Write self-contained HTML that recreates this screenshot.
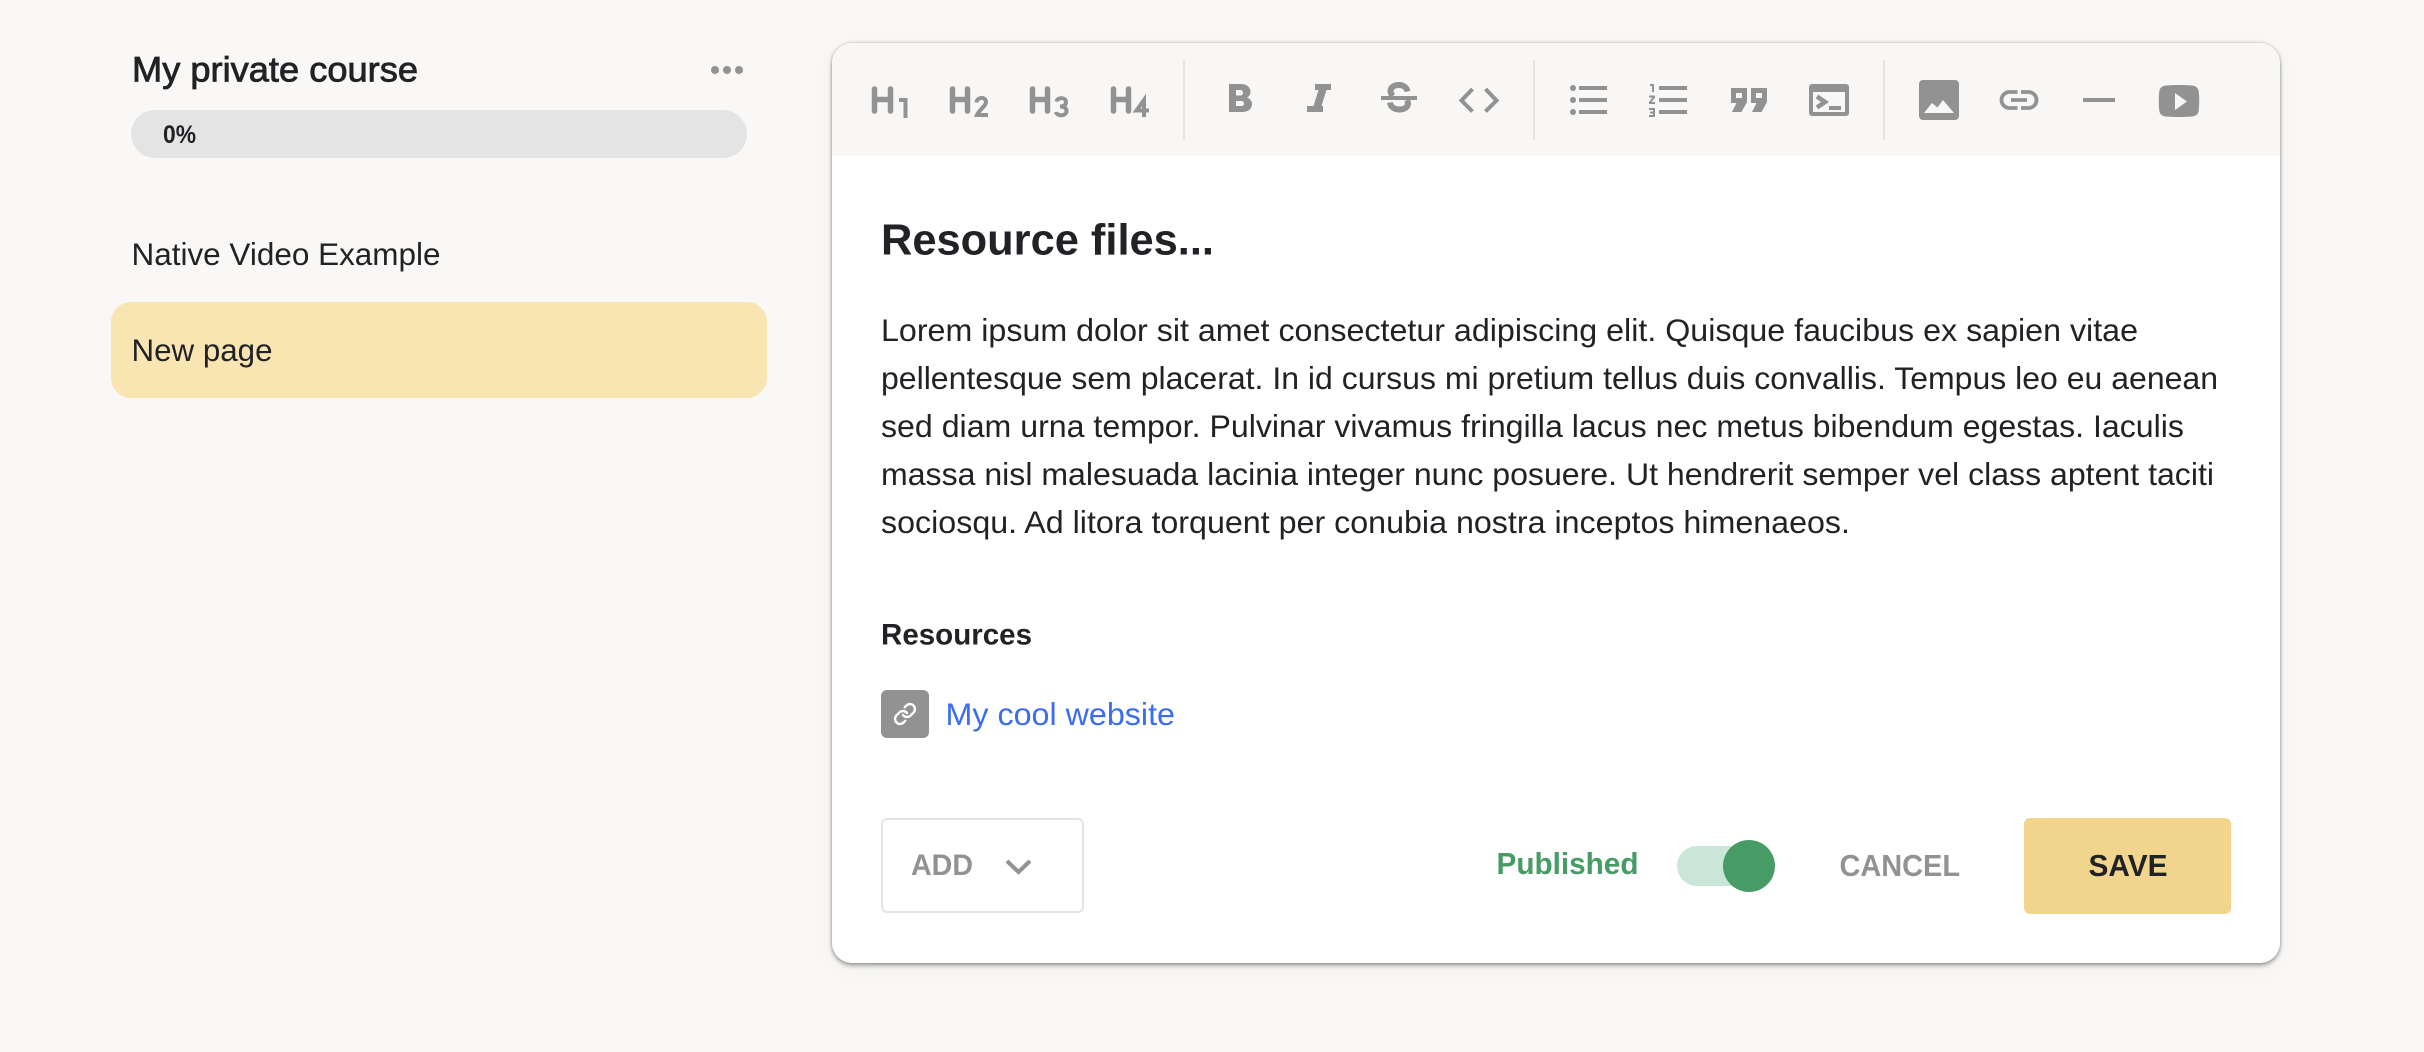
<!DOCTYPE html>
<html lang="en">
<head>
<meta charset="utf-8">
<title>My private course</title>
<style>
html,body{margin:0;padding:0;width:2424px;height:1052px;overflow:hidden;background:#f9f8f6}
body{position:relative;font-family:"Liberation Sans",sans-serif}
.progress{position:absolute;left:131px;top:110px;width:616px;height:48px;border-radius:24px;background:#e4e4e4}
.active{position:absolute;left:111px;top:302px;width:656px;height:96px;border-radius:20px;background:#f8e5b2}
.card{position:absolute;left:832px;top:43px;width:1448px;height:920px;border-radius:20px;background:#fff;box-shadow:0 0 3px rgba(0,0,0,.28),0 3px 4px rgba(0,0,0,.28),0 6px 30px rgba(0,0,0,.03)}
.bar{position:absolute;left:0;top:0;width:100%;height:113px;background:#f8f7f5;border-radius:20px 20px 0 0}
.sep{position:absolute;top:17px;width:2px;height:80px;background:#e4e4e4}
.add{position:absolute;left:881px;top:818px;width:199px;height:91px;border:2px solid #e4e4e4;border-radius:6px;background:#fff}
.save{position:absolute;left:2024px;top:818px;width:207px;height:96px;border-radius:6px;background:#f2d58c}
.track{position:absolute;left:1677px;top:846px;width:84px;height:40px;border-radius:20px;background:#c9e6d8}
.thumb{position:absolute;left:1723px;top:840px;width:52px;height:52px;border-radius:50%;background:#479b65}
.lk{position:absolute;left:881px;top:690px;width:48px;height:48px;border-radius:6px;background:#929292}
svg{position:absolute;left:0;top:0}
text{font-family:"Liberation Sans",sans-serif;fill:#212226}
.m{stroke:#212226;stroke-width:.8px}
.b{font-weight:700}
</style>
</head>
<body>
<div class="progress"></div>
<div class="active"></div>
<div class="card">
  <div class="bar">
    <div class="sep" style="left:351px"></div>
    <div class="sep" style="left:701px"></div>
    <div class="sep" style="left:1051px"></div>
  </div>
</div>
<div class="add"></div>
<div class="save"></div>
<div class="track"></div>
<div class="thumb"></div>
<div class="lk"></div>

<svg width="2424" height="1052" viewBox="0 0 2424 1052" xmlns="http://www.w3.org/2000/svg">
  <!-- sidebar -->
  <text class="m" x="132" y="81.500" font-size="35" textLength="286" lengthAdjust="spacingAndGlyphs">My private course</text>
  <g fill="#929292"><circle cx="715" cy="70" r="4"/><circle cx="727" cy="70" r="4"/><circle cx="739" cy="70" r="4"/></g>
  <text class="b" x="163" y="143" font-size="25" textLength="33" lengthAdjust="spacingAndGlyphs">0%</text>
  <text x="131.500" y="265" font-size="31.500" textLength="309" lengthAdjust="spacingAndGlyphs">Native Video Example</text>
  <text x="131.500" y="361" font-size="31.500" textLength="141" lengthAdjust="spacingAndGlyphs">New page</text>

  <!-- toolbar icons -->
  <g fill="none" stroke="#929292" stroke-width="5.500" stroke-linecap="round">
    <path d="M874.500 89V111M890.500 89V111M874.500 99.500H890.500"/>
    <path d="M952.500 89V111M967.500 89V111M952.500 99.500H967.500"/>
    <path d="M1032.500 89V111M1047.500 89V111M1032.500 99.500H1047.500"/>
    <path d="M1113.500 89V111M1128.500 89V111M1113.500 99.500H1128.500"/>
  </g>
  <g fill="none" stroke="#929292" stroke-width="4">
    <path d="M899 100H905.500V118"/>
    <path d="M976.500 102.500C977 96.500 986 96.500 986 102C986 106 979 110 977 115H988"/>
    <path d="M1056.500 101.500C1057.500 97 1066 97 1066 102C1066 105.500 1063 106.500 1060 106.500C1063.500 106.500 1066.500 108 1066.500 111C1066.500 116.500 1057 116.500 1056 112"/>
    <path d="M1144 117V100L1136.500 110.500H1149"/>
  </g>
  <!-- bold -->
  <path fill="#929292" fill-rule="evenodd" d="M1229 84H1241C1247 84 1250.500 87.500 1250.500 91.500C1250.500 94.500 1249 96.500 1247 97.500C1250 98.500 1252 101 1252 104C1252 109 1248 112 1242 112H1229ZM1236 90V95.500H1240C1242 95.500 1243 94.300 1243 92.700C1243 91.100 1242 90 1240 90ZM1236 101V106H1241C1243 106 1244 105 1244 103.500C1244 102 1243 101 1241 101Z"/>
  <!-- italic -->
  <path fill="#929292" d="M1315 84H1331V90H1326.500L1321.500 106H1323V112H1307V106H1313.500L1318.500 90H1315Z"/>
  <!-- strike -->
  <path fill="#929292" d="M1381 96H1417V100H1381Z"/>
  <path fill="none" stroke="#929292" stroke-width="6" d="M1407.500 91.500C1406.500 87 1403 85 1399 85C1394 85 1390.500 87.500 1390.500 91C1390.500 93 1391.500 94.500 1393 96M1390 102.500C1390.500 107 1394.500 109.500 1399.500 109.500C1404.500 109.500 1408 107 1408 103.500C1408 102 1407.500 101 1407 100"/>
  <!-- code -->
  <path fill="none" stroke="#929292" stroke-width="4" d="M1472.500 89L1461.500 100.500L1472.500 111.500M1485.500 89L1496.500 100.500L1485.500 111.500"/>
  <!-- ul -->
  <g fill="#929292">
    <circle cx="1573" cy="88" r="3"/><circle cx="1573" cy="100" r="3"/><circle cx="1573" cy="112" r="3"/>
    <rect x="1579" y="86" width="28" height="4"/><rect x="1579" y="98" width="28" height="4"/><rect x="1579" y="110" width="28" height="4"/>
    <!-- ol -->
    <rect x="1659" y="86" width="28" height="4"/><rect x="1659" y="98" width="28" height="4"/><rect x="1659" y="110" width="28" height="4"/>
    <path d="M1650 84H1654V92H1652V86H1650Z"/>
    <path d="M1649 95.500H1655V97.500L1651.500 102H1655V104H1649V102L1652.500 97.500H1649Z"/>
    <path d="M1649 108H1655V117H1649V115H1653V113.500H1650V111.500H1653V110H1649Z"/>
    <!-- quotes -->
    <path fill-rule="evenodd" d="M1731 88H1747V102L1741.500 112H1732L1736.500 103H1731ZM1736 93V98H1742V93Z"/>
    <path fill-rule="evenodd" d="M1751 88H1767V102L1761.500 112H1752L1756.500 103H1751ZM1756 93V98H1762V93Z"/>
    <!-- terminal -->
    <path fill-rule="evenodd" d="M1812 84H1846A3 3 0 0 1 1849 87V113A3 3 0 0 1 1846 116H1812A3 3 0 0 1 1809 113V87A3 3 0 0 1 1812 84ZM1813 92V112H1845V92ZM1829 106H1841V110H1829Z"/>
    <!-- image -->
    <path fill-rule="evenodd" d="M1923 80H1955A4 4 0 0 1 1959 84V116A4 4 0 0 1 1955 120H1923A4 4 0 0 1 1919 116V84A4 4 0 0 1 1923 80ZM1924 113H1954L1943 100L1937.500 107.500L1932 103Z"/>
    <!-- minus -->
    <rect x="2083" y="98" width="32" height="4"/>
    <!-- video -->
    <path fill-rule="evenodd" d="M2166 85.500C2176 84.800 2182 84.800 2192 85.500C2196 85.800 2198.500 88 2198.800 92C2199.400 98 2199.400 104 2198.800 110C2198.500 114 2196 116.200 2192 116.500C2182 117.200 2176 117.200 2166 116.500C2162 116.200 2159.500 114 2159.200 110C2158.600 104 2158.600 98 2159.200 92C2159.500 88 2162 85.800 2166 85.500ZM2175 93V110L2187 101.500Z"/>
  </g>
  <path fill="none" stroke="#929292" stroke-width="4.500" d="M1817 96.500L1825 102L1817 107.500"/>
  <path fill="none" stroke="#929292" stroke-width="3.800" d="M2017.500 92H2009.500A8 8 0 0 0 2009.500 108H2017.500M2021 92H2028.500A8 8 0 0 1 2028.500 108H2021M2011 100H2027"/>

  <!-- content -->
  <text class="b" x="881" y="254.500" font-size="44" textLength="333" lengthAdjust="spacingAndGlyphs">Resource files...</text>
  <text x="881" y="341" font-size="31.500" textLength="1257" lengthAdjust="spacingAndGlyphs">Lorem ipsum dolor sit amet consectetur adipiscing elit. Quisque faucibus ex sapien vitae</text>
  <text x="881" y="389" font-size="31.500" textLength="1337" lengthAdjust="spacingAndGlyphs">pellentesque sem placerat. In id cursus mi pretium tellus duis convallis. Tempus leo eu aenean</text>
  <text x="881" y="437" font-size="31.500" textLength="1303" lengthAdjust="spacingAndGlyphs">sed diam urna tempor. Pulvinar vivamus fringilla lacus nec metus bibendum egestas. Iaculis</text>
  <text x="881" y="485" font-size="31.500" textLength="1333" lengthAdjust="spacingAndGlyphs">massa nisl malesuada lacinia integer nunc posuere. Ut hendrerit semper vel class aptent taciti</text>
  <text x="881" y="533" font-size="31.500" textLength="969" lengthAdjust="spacingAndGlyphs">sociosqu. Ad litora torquent per conubia nostra inceptos himenaeos.</text>
  <text class="b" x="881" y="644.500" font-size="30" textLength="151" lengthAdjust="spacingAndGlyphs">Resources</text>

  <g transform="translate(893,702)" fill="none" stroke="#fff" stroke-width="2.400" stroke-linecap="round" stroke-linejoin="round">
    <path d="M10 13a5 5 0 0 0 7.540.54l3-3a5 5 0 0 0-7.070-7.070l-1.720 1.710"/>
    <path d="M14 11a5 5 0 0 0-7.540-.54l-3 3a5 5 0 0 0 7.070 7.070l1.710-1.710"/>
  </g>
  <text x="945.500" y="725" font-size="31.500" style="fill:#3c6df0" textLength="229.500" lengthAdjust="spacingAndGlyphs">My cool website</text>

  <!-- footer -->
  <text class="b" x="911" y="875" font-size="30" style="fill:#929292" textLength="62" lengthAdjust="spacingAndGlyphs">ADD</text>
  <path fill="none" stroke="#929292" stroke-width="4" d="M1007 861L1018.500 872L1030 861"/>
  <text class="b" x="1496.500" y="874" font-size="31" style="fill:#479b65" textLength="142" lengthAdjust="spacingAndGlyphs">Published</text>
  <text class="b" x="1839.500" y="876" font-size="31" style="fill:#929292" textLength="120.500" lengthAdjust="spacingAndGlyphs">CANCEL</text>
  <text class="b" x="2088.500" y="876" font-size="31" textLength="79" lengthAdjust="spacingAndGlyphs">SAVE</text>
</svg>
</body>
</html>
